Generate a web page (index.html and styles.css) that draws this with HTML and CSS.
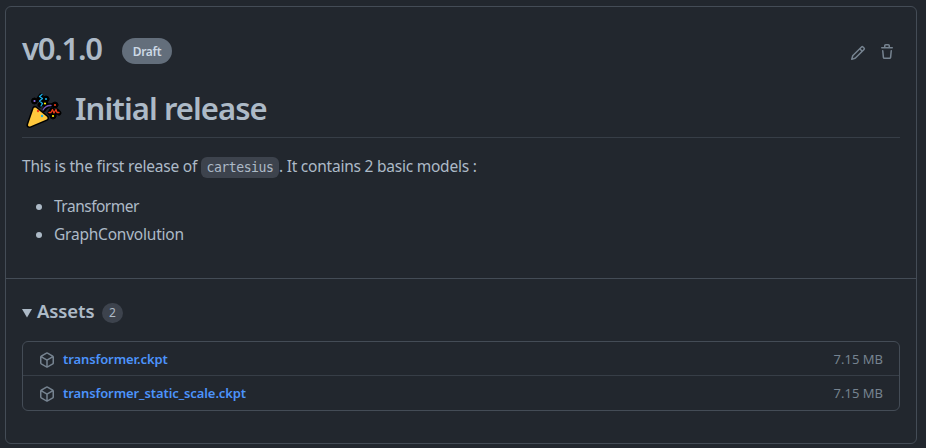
FILE: index.html
```html
<!DOCTYPE html>
<html lang="en">
<head>
<meta charset="utf-8">
<title>v0.1.0</title>
<link rel="stylesheet" href="styles.css">
</head>
<body>
<article class="release">
  <section class="release-body">
    <header class="release-header">
      <h1 class="version">v0.1.0</h1>
      <span class="badge">Draft</span>
      <div class="actions">
        <svg class="icon icon-pencil" viewBox="0 0 16 16"><path fill-rule="evenodd" d="M11.013 1.427a1.75 1.75 0 012.474 0l1.086 1.086a1.75 1.75 0 010 2.474l-8.61 8.61c-.21.21-.47.364-.756.445l-3.251.93a.75.75 0 01-.927-.928l.929-3.25a1.75 1.75 0 01.445-.758l8.61-8.61zm1.414 1.06a.25.25 0 00-.354 0L10.811 3.75l1.439 1.44 1.263-1.263a.25.25 0 000-.354l-1.086-1.086zM11.189 6.25L9.75 4.81l-6.286 6.287a.25.25 0 00-.064.108l-.558 1.953 1.953-.558a.249.249 0 00.108-.064l6.286-6.286z"/></svg>
        <svg class="icon icon-trash" viewBox="0 0 16 16"><path fill-rule="evenodd" d="M6.5 1.75a.25.25 0 01.25-.25h2.5a.25.25 0 01.25.25V3h-3V1.75zm4.5 0V3h2.25a.75.75 0 010 1.5H2.75a.75.75 0 010-1.5H5V1.75C5 .784 5.784 0 6.75 0h2.5C10.216 0 11 .784 11 1.75zM4.496 6.675a.75.75 0 10-1.492.15l.66 6.6A1.75 1.75 0 005.405 15h5.19c.9 0 1.652-.681 1.741-1.576l.66-6.6a.75.75 0 00-1.492-.149l-.66 6.6a.25.25 0 01-.249.225h-5.19a.25.25 0 01-.249-.225l-.66-6.6z"/></svg>
      </div>
    </header>
    <h2 class="title">
      <svg class="party" viewBox="0 0 40 38" fill="none" stroke-linecap="round" stroke-linejoin="round">
        <g stroke="#000" fill="#000">
          <path stroke-width="6" d="M12 17 6.500 33 23 26Z"/>
          <path stroke-width="5" d="M18 4 16 7 19 10 17 13M27 21l2-3 3 3 2-2 2 2"/>
          <path stroke-width="4" d="M21 18Q24 13 30 13" fill="none"/>
          <circle cx="11.500" cy="9" r="3"/><circle cx="23" cy="7" r="3"/><circle cx="22" cy="11.500" r="3"/><circle cx="32" cy="13" r="3"/><circle cx="30" cy="24" r="3"/>
        </g>
        <path d="M12 17 6.500 33 23 26Z" fill="#ffc83d" stroke="#ffc83d" stroke-width="3"/>
        <path d="M19 2.500 16.500 4.500 19.500 6.500 16.500 9 19.500 11.500 18 14" stroke="#19aee5" stroke-width="1.3"/>
        <path d="M20 18Q23 13 28 13.500" stroke="#7355b5" stroke-width="1.4"/>
        <path d="M26 20.500h2l1.500-3 1.500 3.500 2-3.500 1 3h2" stroke="#f03a17" stroke-width="1.3"/>
        <circle cx="11.500" cy="9" r="1.100" fill="#886ce4"/><circle cx="23" cy="7" r="1.100" fill="#19aee5"/><circle cx="22" cy="11.500" r="1.100" fill="#fff100"/><circle cx="32" cy="13" r="1.100" fill="#f03a17"/><circle cx="30" cy="24" r="1.100" fill="#fff100"/><circle cx="15" cy="19" r="1.200" fill="#f03a17"/><circle cx="19" cy="24" r="1.200" fill="#19aee5"/>
      </svg>
      <span>Initial release</span>
    </h2>
    <p class="description">This is the first release of <code>cartesius</code><span class="rest">. It contains 2 basic models :</span></p>
    <ul class="models">
      <li>Transformer</li>
      <li class="model-wide">GraphConvolution</li>
    </ul>
  </section>
  <section class="assets">
    <div class="assets-header"><svg class="caret" viewBox="0 0 10 9"><path d="M0 0h10L5 8.5z"/></svg><h3>Assets</h3><span class="counter">2</span></div>
    <div class="asset-list">
      <div class="asset">
        <svg class="icon" viewBox="0 0 16 16"><path fill-rule="evenodd" d="M8.878.392a1.75 1.75 0 00-1.756 0l-5.25 3.045A1.75 1.75 0 001 4.951v6.098c0 .624.332 1.2.872 1.514l5.25 3.045a1.75 1.75 0 001.756 0l5.25-3.045c.54-.313.872-.89.872-1.514V4.951c0-.624-.332-1.2-.872-1.514L8.878.392zM7.875 1.69a.25.25 0 01.25 0l4.63 2.685L8 7.133 3.245 4.375l4.63-2.685zM2.5 5.677v5.372c0 .09.047.171.125.216l4.625 2.683V8.432L2.5 5.677zm6.25 8.271l4.625-2.683a.25.25 0 00.125-.216V5.677L8.75 8.432v5.516z"/></svg>
        <a class="name">transformer.ckpt</a><span class="size">7.15 MB</span>
      </div>
      <div class="asset">
        <svg class="icon" viewBox="0 0 16 16"><path fill-rule="evenodd" d="M8.878.392a1.75 1.75 0 00-1.756 0l-5.25 3.045A1.75 1.75 0 001 4.951v6.098c0 .624.332 1.2.872 1.514l5.25 3.045a1.75 1.75 0 001.756 0l5.25-3.045c.54-.313.872-.89.872-1.514V4.951c0-.624-.332-1.2-.872-1.514L8.878.392zM7.875 1.69a.25.25 0 01.25 0l4.63 2.685L8 7.133 3.245 4.375l4.63-2.685zM2.5 5.677v5.372c0 .09.047.171.125.216l4.625 2.683V8.432L2.5 5.677zm6.25 8.271l4.625-2.683a.25.25 0 00.125-.216V5.677L8.75 8.432v5.516z"/></svg>
        <a class="name">transformer_static_scale.ckpt</a><span class="size">7.15 MB</span>
      </div>
    </div>
  </section>
</article>
</body>
</html>
```
FILE: styles.css
```css
* { box-sizing: border-box; }
body {
  margin: 0;
  padding: 6px 9px 4px 5px;
  height: 448px;
  background: #22272e;
  color: #adbac7;
  font-family: "Noto Sans", "Open Sans", sans-serif;
  font-size: 15.5px;
  overflow: hidden;
}
h1, h2, h3, p, ul { margin: 0; }
.release { height: 438px; border: 1px solid #444c56; border-radius: 6px; }
.release-body { height: 272px; padding: 18px 16px 0; border-bottom: 1px solid #444c56; }
.release-header { display: flex; align-items: center; height: 48px; }
.version { width: 100px; font-size: 31px; font-weight: 600; line-height: 44px; letter-spacing: -1.25px; padding-bottom: 2px; }
.badge {
  width: 50px; height: 26px; margin-top: 4px; border-radius: 13px;
  background: #636e7b; color: #cdd9e5;
  font-size: 12px; font-weight: 600; line-height: 27px; text-align: center; letter-spacing: -0.3px;
}
.icon { width: 16px; height: 16px; fill: #768390; flex: none; }
.actions { display: flex; gap: 13px; margin: 8px 5px 0 auto; }
.icon-trash { margin-top: -1px; }
.title {
  display: flex; align-items: center; height: 65px; padding-top: 8px;
  border-bottom: 1px solid #373e47;
  font-size: 31px; font-weight: 600; letter-spacing: -0.93px;
}
.title span { margin-top: -2px; }
.party { width: 40px; height: 38px; margin: 4px 12px 0 1px; }
.description { margin-top: 16px; height: 24px; line-height: 24px; white-space: nowrap; letter-spacing: -0.21px; }
.rest { letter-spacing: -0.23px; }
code {
  display: inline-block; width: 78px; height: 21px; border-radius: 6px;
  background: #3d434d; font: 13.2px/22px "DejaVu Sans Mono", monospace;
  letter-spacing: -0.5px; text-align: center; vertical-align: 0;
}
.models { margin-top: 16px; padding-left: 32px; line-height: 24px; letter-spacing: -0.5px; }
.models li + li { margin-top: 4px; }
.model-wide { letter-spacing: -0.22px; }
.assets { padding: 16px; }
.assets-header { display: flex; align-items: center; height: 34px; }
.caret { width: 10px; height: 9px; margin-top: 3px; fill: #adbac7; }
h3 { margin: -2px 0 0 5px; width: 57px; font-size: 18.5px; font-weight: 600; line-height: 30px; letter-spacing: -0.1px; }
.counter {
  width: 21px; height: 20px; margin: 2px 0 0 8px; border-radius: 10px;
  background: #3d434d; font-size: 12px; line-height: 20px; text-align: center;
}
.asset-list { margin-top: 12px; border: 1px solid #444c56; border-radius: 6px; }
.asset { display: flex; align-items: center; height: 33px; padding: 1px 16px 0 16px; }
.asset + .asset { height: 35px; border-top: 1px solid #373e47; }
.asset .icon { margin-top: 1px; }
.name { margin: 0 0 1px 8px; color: #4c93fb; font-weight: 600; font-size: 13px; letter-spacing: -0.1px; }
.size { margin: -1px 0 0 auto; color: #768390; font-size: 13px; }
```
